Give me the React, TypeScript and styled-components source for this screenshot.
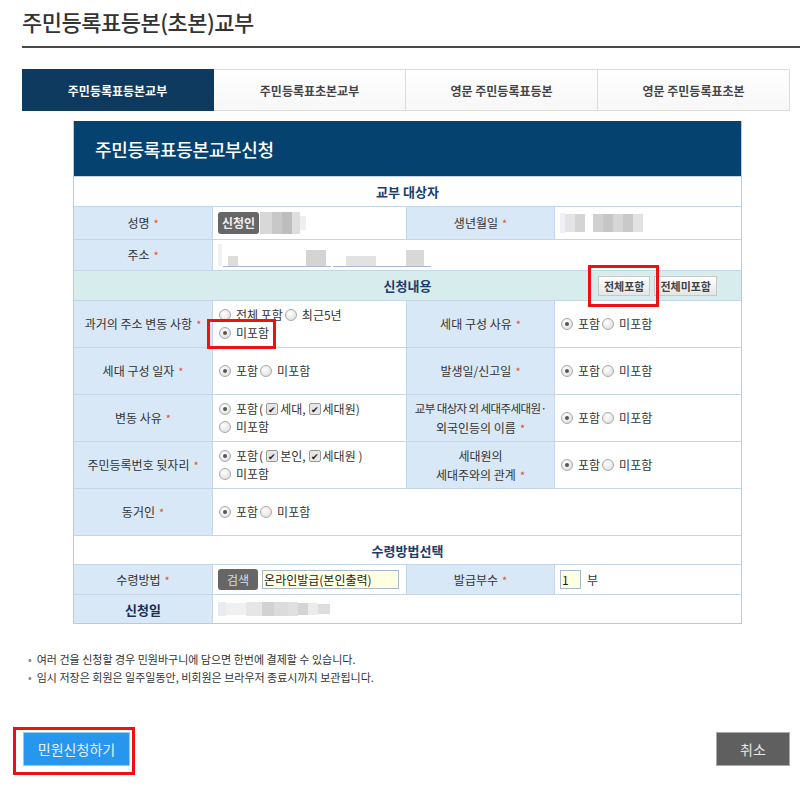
import React from "react";
import styled, { createGlobalStyle, css } from "styled-components";

const GlobalStyle = createGlobalStyle`
  body {
    margin: 0;
    background: #fff;
    font-family: "Noto Sans CJK KR", "Noto Sans", sans-serif;
    color: #333;
  }
`;

const Page = styled.div`
  position: relative;
  width: 800px;
  height: 786px;
  overflow: hidden;
`;

const TitleBar = styled.div`
  margin-left: 22px;
  height: 48px;
  border-bottom: 2px solid #4a4a4a;
  box-sizing: border-box;
  padding-top: 6px;
`;

const Title = styled.h1`
  margin: 0;
  font-size: 22px;
  font-weight: 500;
  color: #333;
  letter-spacing: -0.5px;
  line-height: 30px;
`;

const Tabs = styled.div`
  display: grid;
  grid-template-columns: repeat(4, 192px);
  margin: 21px 0 0 22px;
  height: 42px;
`;

const Tab = styled.div<{ $active?: boolean }>`
  display: flex;
  align-items: center;
  justify-content: center;
  font-size: 12px;
  font-weight: 600;
  border: 1px solid #dcdcdc;
  border-left: none;
  background: linear-gradient(#fff, #f7f7f7);
  color: #444;
  ${(p) =>
    p.$active &&
    css`
      background: #0f3a60;
      border-color: #0f3a60;
      color: #fff;
      font-weight: 700;
    `}
`;

const Form = styled.div`
  margin: 10px 0 0 73px;
  width: 669px;
  border: 1px solid #b8cbdc;
  border-top: none;
  box-sizing: border-box;
`;

const FormHead = styled.div`
  height: 55px;
  background: #064270;
  color: #fff;
  font-size: 18px;
  font-weight: 500;
  display: flex;
  align-items: center;
  padding-left: 21px;
  letter-spacing: -0.3px;
`;

const Row = styled.div<{ $h: number; $tint?: boolean }>`
  display: grid;
  grid-template-columns: 139px 194px 148px 1fr;
  height: ${(p) => p.$h}px;
  border-top: 1px solid #c5d6e6;
  box-sizing: border-box;
  background: ${(p) => (p.$tint ? "#d7eced" : "#fff")};
`;

const Section = styled.div`
  grid-column: 1 / -1;
  display: flex;
  align-items: center;
  justify-content: center;
  font-size: 13px;
  font-weight: 700;
  color: #1c3c6c;
  position: relative;
`;

const Label = styled.div<{ $bold?: boolean }>`
  background: #d9e8f6;
  display: flex;
  flex-direction: column;
  align-items: center;
  justify-content: center;
  text-align: center;
  font-size: 12px;
  color: #333;
  line-height: 19px;
  white-space: nowrap;
  border-right: 1px solid #c5d6e6;
  ${(p) =>
    p.$bold &&
    css`
      font-weight: 700;
      color: #1c2c4c;
      font-size: 13px;
    `}
`;

const Tight = styled.span`
  font-size: 11.5px;
  letter-spacing: -0.6px;
`;

const Value = styled.div<{ $span?: boolean; $line?: boolean }>`
  display: flex;
  flex-direction: column;
  justify-content: center;
  padding-left: 5px;
  font-size: 12px;
  color: #333;
  line-height: 18px;
  ${(p) => p.$span && css`grid-column: span 3;`}
  ${(p) => p.$line && css`border-right: 1px solid #c5d6e6;`}
`;

const Inline = styled.div`
  display: flex;
  align-items: center;
  gap: 1px;
  white-space: nowrap;
`;

const Star = styled.span`
  color: #e2512b;
  margin-left: 4px;
  font-size: 11px;
`;

const RadioDot = styled.span<{ $on?: boolean }>`
  display: inline-block;
  box-sizing: border-box;
  width: 12px;
  height: 12px;
  border-radius: 50%;
  border: 1px solid #a9a9a9;
  background: radial-gradient(circle at 40% 35%, #fff, #d8d8d8);
  margin: 0 4px 0 1px;
  position: relative;
  ${(p) =>
    p.$on &&
    css`
      &::after {
        content: "";
        position: absolute;
        left: 3px;
        top: 3px;
        width: 4px;
        height: 4px;
        border-radius: 50%;
        background: #555;
      }
    `}
`;

const Check = styled.span`
  display: inline-flex;
  align-items: center;
  justify-content: center;
  width: 12px;
  height: 12px;
  box-sizing: border-box;
  border: 1px solid #999;
  border-radius: 2px;
  background: #e6e6e6;
  font-size: 9px;
  color: #222;
  margin: 0 1px 0 2px;
  line-height: 1;
`;

const Badge = styled.span`
  display: inline-flex;
  align-items: center;
  background: #666;
  color: #eee;
  font-size: 12px;
  font-weight: 600;
  height: 22px;
  padding: 0 4px;
  border-radius: 3px;
`;

const DarkBtn = styled.span`
  display: inline-flex;
  align-items: center;
  background: #666;
  color: #ddd;
  font-size: 12px;
  height: 21px;
  padding: 0 9px;
  border-radius: 3px;
  margin-right: 3px;
`;

const TextField = styled.span<{ $w: number }>`
  display: inline-flex;
  align-items: center;
  width: ${(p) => p.$w}px;
  height: 19px;
  box-sizing: border-box;
  border: 1px solid #a9b9cc;
  background: #ffffe3;
  font-size: 12px;
  padding-left: 1px;
  color: #222;
`;

const Blur = styled.div<{ $bottom?: boolean }>`
  display: flex;
  align-items: ${(p) => (p.$bottom ? "flex-end" : "center")};
  height: ${(p) => (p.$bottom ? "22px" : "100%")};
`;

const Px = styled.span<{ $w: number; $h: number; $c: string }>`
  display: inline-block;
  width: ${(p) => p.$w}px;
  height: ${(p) => p.$h}px;
  background: ${(p) => p.$c};
`;

const Underline = styled.div`
  display: flex;
  gap: 2px;
  margin-left: 5px;
  span {
    height: 1px;
    background: #a8b8d4;
  }
`;

const SmallBtns = styled.div`
  position: absolute;
  right: 24px;
  top: 5px;
  display: flex;
  gap: 4px;
`;

const GrayBtn = styled.span`
  display: inline-flex;
  align-items: center;
  height: 20px;
  padding: 0 5px;
  font-size: 11px;
  font-weight: 600;
  color: #444;
  border: 1px solid #c8c8c8;
  background: linear-gradient(#fff, #e5e5e5);
  box-sizing: border-box;
`;

const Notes = styled.ul`
  margin: 26px 0 0 28px;
  padding: 0;
  list-style: none;
  font-size: 11px;
  color: #333;
  line-height: 18px;
  li::before {
    content: "•";
    color: #888;
    margin-right: 5px;
  }
`;

const Actions = styled.div`
  display: flex;
  justify-content: space-between;
  margin: 46px 10px 0 23px;
`;

const ActionBtn = styled.button<{ $kind: "primary" | "cancel" }>`
  height: 34px;
  border: 1px solid ${(p) => (p.$kind === "primary" ? "#9cc9ee" : "#aaa")};
  background: ${(p) => (p.$kind === "primary" ? "#2796ee" : "#5f5f5f")};
  color: ${(p) => (p.$kind === "primary" ? "#e8f3ff" : "#e4e4e4")};
  font-family: inherit;
  font-size: 14px;
  padding: 0;
  width: ${(p) => (p.$kind === "primary" ? "107px" : "74px")};
`;

const Highlight = styled.div<{ $x: number; $y: number; $w: number; $h: number }>`
  position: absolute;
  left: ${(p) => p.$x}px;
  top: ${(p) => p.$y}px;
  width: ${(p) => p.$w}px;
  height: ${(p) => p.$h}px;
  border: 3px solid #ee1111;
  box-sizing: border-box;
  pointer-events: none;
`;

const Radio = ({ on, children }: { on?: boolean; children: React.ReactNode }) => (
  <>
    <RadioDot $on={on} />
    <span>{children}</span>
  </>
);

const IncludeRadios = () => (
  <Inline>
    <Radio on>포함</Radio>
    <Radio>미포함</Radio>
  </Inline>
);

type Block = [number, number, string];
const Pixels = ({ blocks, bottom }: { blocks: Block[]; bottom?: boolean }) => (
  <Blur $bottom={bottom}>
    {blocks.map(([w, h, c], i) => (
      <Px key={i} $w={w} $h={h} $c={c} />
    ))}
  </Blur>
);

export default function App() {
  return (
    <Page>
      <GlobalStyle />
      <TitleBar>
        <Title>주민등록표등본(초본)교부</Title>
      </TitleBar>

      <Tabs>
        <Tab $active>주민등록표등본교부</Tab>
        <Tab>주민등록표초본교부</Tab>
        <Tab>영문 주민등록표등본</Tab>
        <Tab>영문 주민등록표초본</Tab>
      </Tabs>

      <Form>
        <FormHead>주민등록표등본교부신청</FormHead>

        <Row $h={30}>
          <Section>교부 대상자</Section>
        </Row>

        <Row $h={33}>
          <Label>
            <span>
              성명<Star>*</Star>
            </span>
          </Label>
          <Value $line>
            <Inline>
              <Badge>신청인</Badge>
              <Pixels
                blocks={[
                  [12, 22, "#d8d8d8"],
                  [10, 22, "#c8c8c8"],
                  [10, 22, "#bdbdbd"],
                  [8, 22, "#dedede"],
                  [6, 14, "#efefef"],
                ]}
              />
            </Inline>
          </Value>
          <Label>
            <span>
              생년월일<Star>*</Star>
            </span>
          </Label>
          <Value>
            <Pixels
              blocks={[
                [5, 20, "#eef0f4"],
                [10, 18, "#e4e4e4"],
                [10, 18, "#d4d4d4"],
                [8, 18, "#fff"],
                [10, 18, "#d0d0d0"],
                [10, 18, "#c6c6c6"],
                [10, 18, "#d6d6d6"],
                [10, 18, "#c9c9c9"],
                [10, 18, "#e2e2e2"],
              ]}
            />
          </Value>
        </Row>

        <Row $h={31}>
          <Label>
            <span>
              주소<Star>*</Star>
            </span>
          </Label>
          <Value $span>
            <Pixels
              bottom
              blocks={[
                [4, 22, "#eef2f8"],
                [6, 1, "#fff"],
                [10, 10, "#dddddd"],
                [68, 1, "#fff"],
                [20, 16, "#d4d4d4"],
                [20, 1, "#fff"],
                [30, 10, "#e2e2e2"],
                [30, 1, "#fff"],
                [18, 16, "#d8d8d8"],
              ]}
            />
            <Underline>
              <span style={{ width: 108 }} />
              <span style={{ width: 98 }} />
            </Underline>
          </Value>
        </Row>

        <Row $h={30} $tint>
          <Section>
            신청내용
            <SmallBtns>
              <GrayBtn>전체포함</GrayBtn>
              <GrayBtn>전체미포함</GrayBtn>
            </SmallBtns>
          </Section>
        </Row>

        <Row $h={47}>
          <Label>
            <span>
              과거의 주소 변동 사항<Star>*</Star>
            </span>
          </Label>
          <Value $line>
            <Inline>
              <Radio>전체 포함</Radio>
              <Radio>최근5년</Radio>
            </Inline>
            <Inline>
              <Radio on>미포함</Radio>
            </Inline>
          </Value>
          <Label>
            <span>
              세대 구성 사유<Star>*</Star>
            </span>
          </Label>
          <Value>
            <IncludeRadios />
          </Value>
        </Row>

        <Row $h={47}>
          <Label>
            <span>
              세대 구성 일자<Star>*</Star>
            </span>
          </Label>
          <Value $line>
            <IncludeRadios />
          </Value>
          <Label>
            <span>
              발생일/신고일<Star>*</Star>
            </span>
          </Label>
          <Value>
            <IncludeRadios />
          </Value>
        </Row>

        <Row $h={47}>
          <Label>
            <span>
              변동 사유<Star>*</Star>
            </span>
          </Label>
          <Value $line>
            <Inline>
              <Radio on>포함</Radio>
              <span>(</span>
              <Check>✔</Check>
              <span>세대,</span>
              <Check>✔</Check>
              <span>세대원)</span>
            </Inline>
            <Inline>
              <Radio>미포함</Radio>
            </Inline>
          </Value>
          <Label>
            <Tight>교부 대상자 외 세대주세대원·</Tight>
            <span>
              외국인등의 이름<Star>*</Star>
            </span>
          </Label>
          <Value>
            <IncludeRadios />
          </Value>
        </Row>

        <Row $h={47}>
          <Label>
            <span>
              주민등록번호 뒷자리<Star>*</Star>
            </span>
          </Label>
          <Value $line>
            <Inline>
              <Radio on>포함</Radio>
              <span>(</span>
              <Check>✔</Check>
              <span>본인,</span>
              <Check>✔</Check>
              <span>세대원 )</span>
            </Inline>
            <Inline>
              <Radio>미포함</Radio>
            </Inline>
          </Value>
          <Label>
            <span>세대원의</span>
            <span>
              세대주와의 관계<Star>*</Star>
            </span>
          </Label>
          <Value>
            <IncludeRadios />
          </Value>
        </Row>

        <Row $h={47}>
          <Label>
            <span>
              동거인<Star>*</Star>
            </span>
          </Label>
          <Value $span>
            <IncludeRadios />
          </Value>
        </Row>

        <Row $h={29}>
          <Section>수령방법선택</Section>
        </Row>

        <Row $h={30}>
          <Label>
            <span>
              수령방법<Star>*</Star>
            </span>
          </Label>
          <Value $line>
            <Inline>
              <DarkBtn>검색</DarkBtn>
              <TextField $w={137}>온라인발급(본인출력)</TextField>
            </Inline>
          </Value>
          <Label>
            <span>
              발급부수<Star>*</Star>
            </span>
          </Label>
          <Value>
            <Inline>
              <TextField $w={21}>1</TextField>
              <span style={{ marginLeft: 5 }}>부</span>
            </Inline>
          </Value>
        </Row>

        <Row $h={29}>
          <Label $bold>신청일</Label>
          <Value $span>
            <Pixels
              blocks={[
                [8, 14, "#e8ecf2"],
                [20, 12, "#f0f0f0"],
                [16, 14, "#e6e6e6"],
                [12, 14, "#d2d2d2"],
                [14, 14, "#dcdcdc"],
                [10, 14, "#e0e0e0"],
                [10, 12, "#d4d4d4"],
                [10, 12, "#ececec"],
                [12, 10, "#dedede"],
              ]}
            />
          </Value>
        </Row>
      </Form>

      <Notes>
        <li>여러 건을 신청할 경우 민원바구니에 담으면 한번에 결제할 수 있습니다.</li>
        <li>임시 저장은 회원은 일주일동안, 비회원은 브라우저 종료시까지 보관됩니다.</li>
      </Notes>

      <Actions>
        <ActionBtn $kind="primary">민원신청하기</ActionBtn>
        <ActionBtn $kind="cancel">취소</ActionBtn>
      </Actions>

      <Highlight $x={588} $y={265} $w={71} $h={42} />
      <Highlight $x={207} $y={319} $w={69} $h={30} />
      <Highlight $x={13} $y={727} $w={122} $h={48} />
    </Page>
  );
}
